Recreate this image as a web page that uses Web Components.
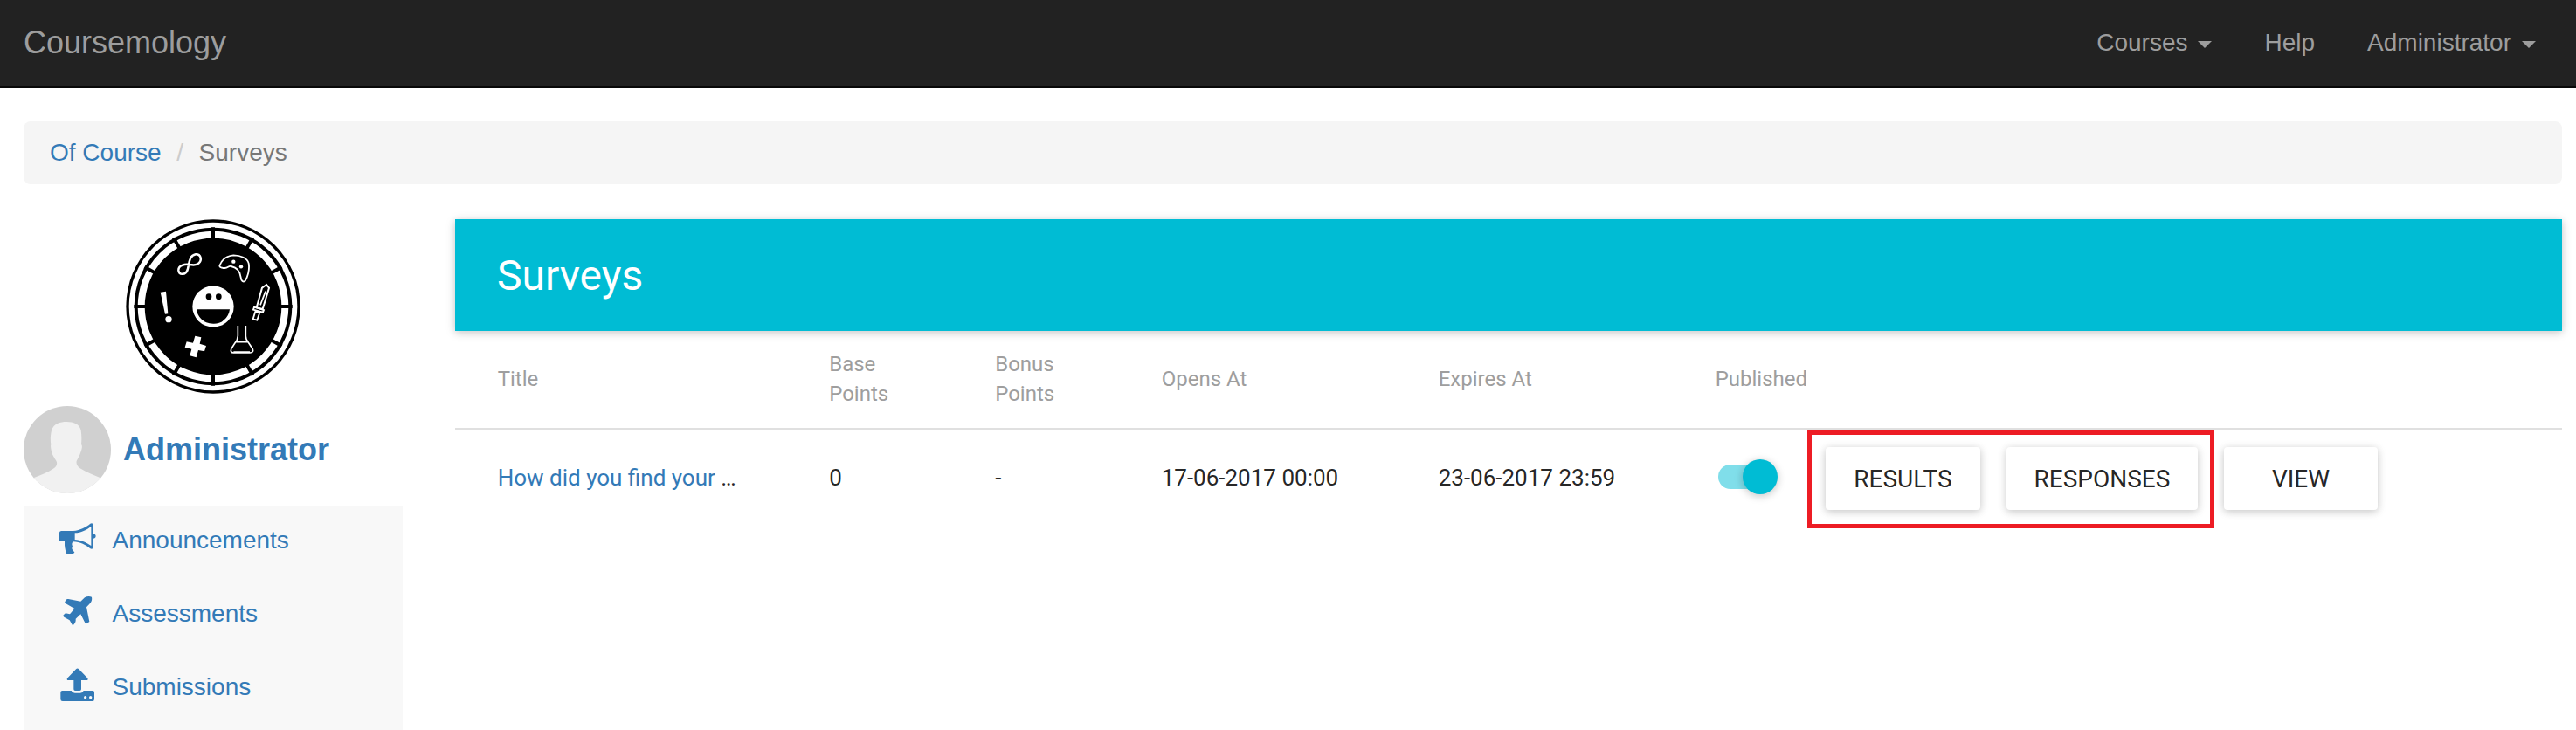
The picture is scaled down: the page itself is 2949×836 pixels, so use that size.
<!DOCTYPE html>
<html lang="en">
<head>
<meta charset="utf-8">
<title>Surveys - Coursemology</title>
<style>
html,body{margin:0;background:#fff;height:836px;overflow:hidden}
body{font-family:"Liberation Sans",Arial,sans-serif;font-size:28px;line-height:40px;color:#333}
</style>
</head>
<body>
<course-app></course-app>
<script>
const define = (name, html) => customElements.define(name, class extends HTMLElement {
  constructor() {
    super();
    const t = document.createElement('template');
    t.innerHTML = html;
    this.attachShadow({mode: 'open'}).append(t.content.cloneNode(true));
  }
});

define('nav-link', `<style>
:host{display:flex;align-items:center;padding:0 30px;color:#9d9d9d;white-space:nowrap}
i{display:none;margin:5px 0 0 12px;border:8px solid transparent;border-top-color:#9d9d9d;border-bottom:0}
:host([menu]) i{display:block}
</style><slot></slot><i></i>`);

define('top-bar', `<style>
:host{display:flex;justify-content:space-between;box-sizing:border-box;height:101px;padding:0 16px 0 27px;background:#222;border-bottom:2px solid #080808}
.brand{font-size:36px;color:#9d9d9d;line-height:98px}
nav{display:flex;height:97px}
</style><div class="brand">Coursemology</div>
<nav><nav-link menu>Courses</nav-link><nav-link>Help</nav-link><nav-link menu>Administrator</nav-link></nav>`);

define('bread-crumbs', `<style>
:host{display:flex;box-sizing:border-box;height:72px;padding:16px 30px;background:#f5f5f5;border-radius:8px;color:#777}
a{color:#337ab7}span{color:#ccc;width:43px;text-align:center}
</style><a>Of Course</a><span>/</span>Surveys`);

define('course-logo', `<style>:host{display:block;width:200px;height:200px}svg{display:block}</style>
<svg width="200" height="200" viewBox="42 32 600 600" fill="none">
<circle cx="342" cy="332" r="299" fill="#000"/><circle cx="342" cy="332" r="289" fill="#fff"/>
<circle cx="342" cy="332" r="271" fill="#000"/><circle cx="342" cy="332" r="247" stroke="#fff" stroke-width="24"/>
<g stroke="#000" stroke-width="12"><path d="M342 60V100M342 564V604M70 332H110M574 332H614"/>
<path d="M342 60V100M342 564V604M70 332H110M574 332H614" transform="rotate(30 342 332)"/>
<path d="M342 60V100M342 564V604M70 332H110M574 332H614" transform="rotate(60 342 332)"/></g>
<circle cx="342" cy="332" r="71" fill="#fff"/><circle cx="327" cy="298" r="10" fill="#000"/><circle cx="361" cy="298" r="10" fill="#000"/>
<path d="M285 342H399Q396 364 380 378T342 391Q316 391 301 375T285 342Z" fill="#000"/>
<path d="M262 188C244 186 222 190 223 208C225 226 248 224 254 206C260 186 258 158 282 153C300 152 305 172 292 184C283 192 272 190 262 188Z" stroke="#fff" stroke-width="7.5"/>
<path d="M364 192C372 170 388 158 412 156C436 156 460 166 464 184C468 206 460 232 452 244C446 250 438 244 437 232C435 212 424 198 404 194C394 192 394 199 382 200C372 200 364 198 364 192Z" stroke="#fff" stroke-width="5.5"/>
<circle cx="412" cy="178" r="6.5" fill="#fff"/><circle cx="438" cy="195" r="6.5" fill="#fff"/>
<path d="M161 283L180 280L187 357L177 358Z" fill="#fff"/><circle cx="189" cy="376" r="11" fill="#fff"/>
<path d="M525 257L534 268L512 341L491 336L510 268Z" stroke="#fff" stroke-width="6"/>
<path d="M522 280L504 327" stroke="#fff" stroke-width="5"/>
<path d="M483 334L516 344L513 352L480 343ZM487 349L502 353L493 379L479 375Z" stroke="#fff" stroke-width="5.5"/>
<path d="M280 433L301 438L296 460L318 467L312 486L291 482L284 507L262 501L268 478L245 472L251 453L273 457Z" fill="#fff"/>
<path d="M427 398V433Q426 448 418 456L404 478Q400 490 412 491H468Q482 490 478 478L462 454Q454 444 454 434V398M418 454H462M412 488H468" stroke="#fff" stroke-width="5"/>
</svg>`);

define('user-card', `<style>
:host{display:flex;align-items:center;height:100px;gap:14px;color:#337ab7;font-weight:bold;font-size:36px}
svg{display:block}b{margin-top:-1px}
</style><svg width="100" height="100" viewBox="0 0 300 300"><clipPath id="c"><circle cx="150" cy="150" r="150"/></clipPath>
<g clip-path="url(#c)"><path fill="#d0d0d0" d="M0 0H300V300H0z"/>
<path fill="#f1f1f1" d="M94 132C91 112 93 98 96 84C103 60 126 54 148 54C171 54 193 62 197 84C199 98 200 112 198 132C203 136 200 148 197 156C193 170 186 180 182 189C180 198 184 206 194 214C217 228 240 236 264 247L300 300H0L34 247C60 236 84 228 104 214C116 206 116 194 112 188C106 178 98 168 96 156C94 148 92 136 94 132Z"/></g></svg><b><slot></slot></b>`);

define('side-item', `<style>
:host{display:flex;align-items:center;height:84px;color:#337ab7;padding-left:23px}
slot[name=icon]{display:block;width:78.5px;height:80px}
span{margin-top:-5px}
</style><slot name="icon"></slot><span><slot></slot></span>`);

define('side-bar', `<style>
:host{display:block;width:434px}
course-logo{margin:0 auto 14px}
user-card{margin-bottom:14px}
nav{background:#f8f8f8;height:257px;overflow:hidden}
svg{display:block;width:80px;height:80px;fill:#337ab7}
</style><course-logo></course-logo><user-card>Administrator</user-card>
<nav>
<side-item><svg slot="icon" viewBox="0 3 240 240"><path fill-rule="evenodd" d="M60 84H101C126 82 147 70 160 59Q169 55 170 64V94Q178 94 179 102Q178 110 170 110V140Q169 149 160 145C146 132 125 122 101 121Q94 128 99 137Q95 143 99 149Q102 154 106 157Q104 164 91 165Q80 164 78 161Q71 144 72 120H60Q53 119 53 113V92Q54 85 60 84ZM107 91V114C128 115 148 124 163 135V69C148 80 128 91 107 91Z"/></svg>Announcements</side-item>
<side-item><svg slot="icon" viewBox="0 255 240 240"><path d="M165 311Q168 325 157 335L147 346L157 396L147 403Q144 403 142 400L127 370L110 386Q111 394 108 400L102 407Q99 409 97 405L89 391L70 380Q65 377 68 373L75 367L90 370L106 351L75 333Q71 330 73 327L79 319Q81 317 85 318L127 326L141 313Q153 306 165 311Z"/></svg>Assessments</side-item>
<side-item><svg slot="icon" viewBox="0 507 240 240"><path fill-rule="evenodd" d="M112 558Q116 555 120 558L151 590Q154 597 147 597H129V628Q129 633 124 633H108Q103 633 103 628V597H85Q78 597 81 590ZM64 633H95Q98 641 107 641H126Q134 641 137 633H168Q174 633 174 639V662Q174 669 167 669H65Q58 669 58 662V639Q58 633 64 633ZM138 656a5 5 0 1 0 10 0a5 5 0 1 0-10 0ZM156 656a5 5 0 1 0 10 0a5 5 0 1 0-10 0Z"/></svg>Submissions</side-item>
</nav>`);

define('toggle-switch', `<style>
:host{display:flex;align-items:center;width:68px;height:40px}
.t{width:60px;height:28px;border-radius:14px;background:#80deea}
.k{width:40px;height:40px;border-radius:50%;background:#00bcd4;margin-left:-32px;box-shadow:0 2px 12px rgba(0,0,0,.12),0 2px 8px rgba(0,0,0,.12)}
</style><div class="t"></div><div class="k"></div>`);

define('raised-button', `<style>
:host{display:block;box-sizing:border-box;min-width:176px;height:72px;line-height:73px;text-align:center;border-radius:4px;background:#fff;color:rgba(0,0,0,.87);font-size:28px;white-space:nowrap;box-shadow:0 2px 12px rgba(0,0,0,.12),0 2px 8px rgba(0,0,0,.12)}
</style><slot></slot>`);

define('survey-table', `<style>
:host{display:block;font-size:26px;color:rgba(0,0,0,.87)}
.row{display:grid;grid-template-columns:379.5px 190px 190.5px 317px 317px 1fr;align-items:center;padding-left:48.7px}
.head{height:111px;border-bottom:2px solid #e0e0e0;font-size:24px;line-height:34.28px;color:#9e9e9e}
.head>*{margin-top:-1px}
.body{height:108px}
.body>div{white-space:nowrap;padding-top:1px}
a{color:#337ab7}
.body>.acts{display:flex;align-items:center;position:relative;padding:0}
toggle-switch{margin:0 55px 0 3.3px}
raised-button{margin-top:4px;margin-right:30px}
.mark{position:absolute;left:105.3px;top:-15px;width:456px;height:102px;border:5px solid #ed1c24}
</style>
<div class="row head"><div>Title</div><div>Base<br>Points</div><div>Bonus<br>Points</div><div>Opens At</div><div>Expires At</div><div>Published</div></div>
<div class="row body"><div><a>How did you find your </a>…</div><div>0</div><div>-</div><div>17-06-2017 00:00</div><div>23-06-2017 23:59</div>
<div class="acts"><toggle-switch></toggle-switch><raised-button style="width:177px">RESULTS</raised-button><raised-button style="width:219px">RESPONSES</raised-button><raised-button>VIEW</raised-button><div class="mark"></div></div></div>`);

define('survey-panel', `<style>
:host{display:block;flex:1;font-family:Roboto,sans-serif}
h1{margin:0;height:128px;line-height:130px;padding-left:48px;background:#00bcd4;color:#fff;font-size:48px;font-weight:400;box-shadow:0 2px 12px rgba(0,0,0,.12),0 2px 8px rgba(0,0,0,.12)}
</style><h1>Surveys</h1><survey-table></survey-table>`);

define('course-app', `<style>
:host{display:block}
main{padding:38px 16px 0 27px}
.cols{display:flex;gap:60px;margin-top:40px}
</style><top-bar></top-bar><main><bread-crumbs></bread-crumbs><div class="cols"><side-bar></side-bar><survey-panel></survey-panel></div></main>`);
</script>
</body>
</html>
